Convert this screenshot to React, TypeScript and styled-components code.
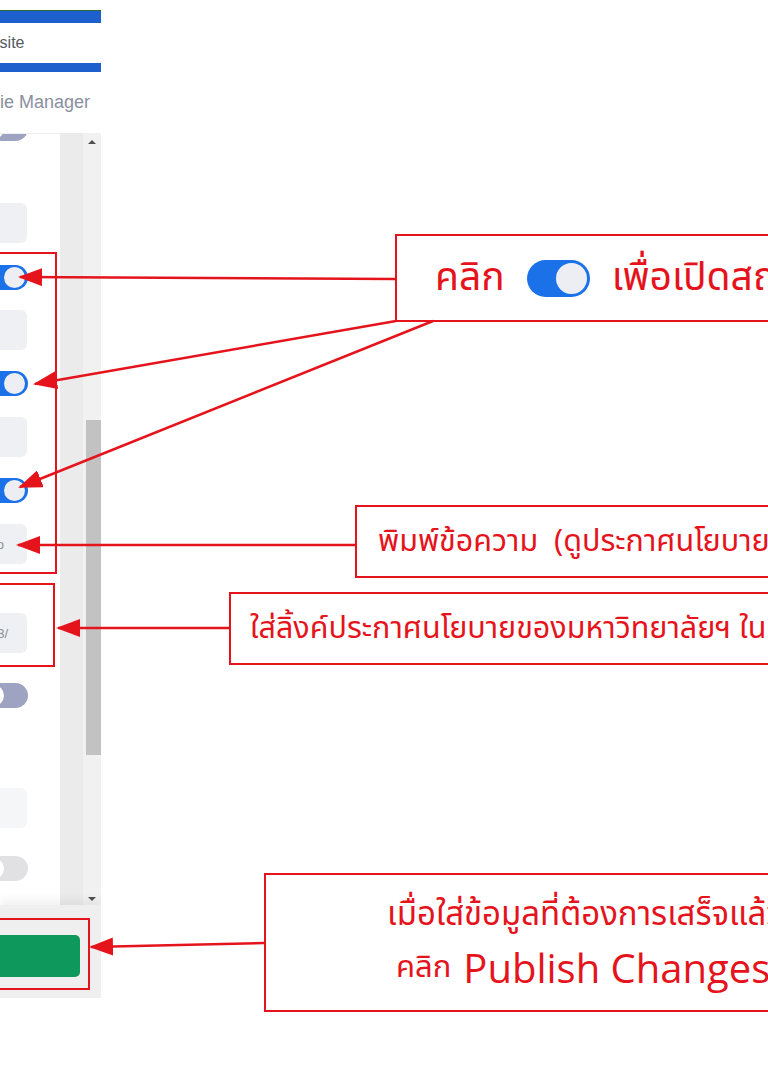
import React from 'react';
import styled, { createGlobalStyle } from 'styled-components';

const GlobalStyle = createGlobalStyle`
  html, body {
    margin: 0;
    padding: 0;
    background: #fff;
  }
  body {
    font-family: "Liberation Sans", "Noto Sans", sans-serif;
  }
`;

const RED = '#e5141c';

const Page = styled.div`
  position: relative;
  width: 768px;
  height: 1069px;
  overflow: hidden;
  background: #fff;
`;

/* ---------- left settings panel (cropped) ---------- */

const Panel = styled.div`
  width: 101px;
  display: flex;
  flex-direction: column;
  overflow: hidden;
  padding-top: 10px;
`;

const HeaderBar = styled.div<{ $h: number; $green?: boolean }>`
  height: ${p => p.$h}px;
  background: #1c5fcd;
  border-top: ${p => (p.$green ? '1px solid #2e6a2c' : 'none')};
`;

const HeaderRow = styled.div<{ $h: number; $size: number; $color: string; $shift: number }>`
  height: ${p => p.$h}px;
  display: flex;
  align-items: center;
  white-space: nowrap;
  font-size: ${p => p.$size}px;
  color: ${p => p.$color};
  span {
    margin-left: ${p => p.$shift}px;
  }
`;

const Body = styled.div`
  height: 772px;
  display: flex;
`;

const Content = styled.div`
  width: 60px;
  background: #fff;
  border-top: 1px solid #eeeff1;
  overflow: hidden;
  display: flex;
  flex-direction: column;
  align-items: flex-end;
  padding-right: 32px;
  box-sizing: border-box;
`;

const Gutter = styled.div`
  width: 23px;
  background: #ebebeb;
`;

const Scrollbar = styled.div`
  width: 18px;
  background: #f1f1f1;
  display: flex;
  flex-direction: column;
  align-items: center;
`;

const ScrollArrow = styled.div<{ $down?: boolean }>`
  height: 17px;
  display: flex;
  align-items: ${p => (p.$down ? 'flex-end' : 'center')};
  padding-bottom: ${p => (p.$down ? '4px' : '0')};
  box-sizing: border-box;
  &::before {
    content: '';
    border-left: 4px solid transparent;
    border-right: 4px solid transparent;
    ${p => (p.$down ? 'border-top: 4px solid #505050;' : 'border-bottom: 4px solid #505050;')}
  }
`;

const Track = styled.div`
  flex: 1;
  width: 100%;
  display: flex;
  flex-direction: column;
  align-items: flex-end;
`;

const Thumb = styled.div`
  margin-top: 270px;
  width: 15px;
  height: 335px;
  background: #c2c2c2;
`;

type ToggleKind = 'on' | 'off' | 'disabled';

const trackColor = (k: ToggleKind) =>
  k === 'on' ? '#1b72e8' : k === 'off' ? '#9ea3c1' : '#e1e1e3';

const Toggle = styled.div<{ $kind: ToggleKind; $top: number }>`
  flex-shrink: 0;
  margin-top: ${p => p.$top}px;
  width: 48px;
  height: 25px;
  border-radius: 13px;
  background: ${p => trackColor(p.$kind)};
  position: relative;
  &::after {
    content: '';
    position: absolute;
    top: 2px;
    ${p => (p.$kind === 'on' ? 'right: 3px;' : 'left: 3px;')}
    width: 21px;
    height: 21px;
    border-radius: 50%;
    background: ${p => (p.$kind === 'on' ? '#eceef4' : '#fff')};
  }
`;

const Field = styled.div<{ $top: number; $pale?: boolean; $pad?: number }>`
  flex-shrink: 0;
  margin-top: ${p => p.$top}px;
  margin-right: 1px;
  width: 220px;
  height: 40px;
  border-radius: 6px;
  background: ${p => (p.$pale ? '#f5f6f8' : '#eff0f3')};
  display: flex;
  align-items: center;
  justify-content: flex-end;
  padding-right: ${p => p.$pad ?? 10}px;
  box-sizing: border-box;
  font-size: 13px;
  color: #8a8e99;
  white-space: nowrap;
  overflow: hidden;
`;

const Footer = styled.div`
  height: 93px;
  background: #efefef;
  box-shadow: 0 -6px 8px rgba(0, 0, 0, 0.05);
  position: relative;
  display: flex;
  justify-content: flex-end;
  padding: 30px 21px 0 0;
  box-sizing: border-box;
`;

const PublishButton = styled.button`
  flex-shrink: 0;
  width: 300px;
  height: 42px;
  border: none;
  border-radius: 5px;
  background: #0f985b;
  color: #fff;
  font-size: 14px;
  font-family: inherit;
`;

/* ---------- annotations ---------- */

const Frame = styled.div<{ $x: number; $y: number; $w: number; $h: number }>`
  position: absolute;
  left: ${p => p.$x}px;
  top: ${p => p.$y}px;
  width: ${p => p.$w}px;
  height: ${p => p.$h}px;
  border: 2px solid ${RED};
  box-sizing: border-box;
`;

const Callout = styled(Frame)<{ $pad: number; $size: number }>`
  background: #fff;
  display: flex;
  flex-direction: column;
  justify-content: center;
  padding-left: ${p => p.$pad}px;
  font-family: "Noto Sans Thai", "Leelawadee UI", "Tahoma", "Noto Sans", sans-serif;
  font-size: ${p => p.$size}px;
  color: ${RED};
  white-space: pre;
`;

const Line = styled.div<{ $indent?: number; $gap?: number; $size?: number }>`
  display: flex;
  align-items: center;
  gap: ${p => p.$gap ?? 22}px;
  margin-left: ${p => p.$indent ?? 0}px;
  ${p => (p.$size ? `font-size: ${p.$size}px;` : '')}
  & > * {
    flex-shrink: 0;
  }
`;

const Latin = styled.span`
  font-family: "Open Sans", "Liberation Sans", sans-serif;
  font-size: 40px;
`;

const SwitchIcon = styled.span`
  display: inline-flex;
  align-items: center;
  justify-content: flex-end;
  width: 63px;
  height: 37px;
  border-radius: 19px;
  background: #1b72e8;
  padding-right: 3px;
  box-sizing: border-box;
  &::after {
    content: '';
    width: 31px;
    height: 31px;
    border-radius: 50%;
    background: #eceef4;
  }
`;

const Arrows = styled.svg`
  position: absolute;
  left: 0;
  top: 0;
  pointer-events: none;
`;

const arrows: [number, number, number, number][] = [
  [395, 279, 20, 277],
  [396, 321, 35, 384],
  [433, 321, 20, 487],
  [355, 545, 18, 545],
  [229, 628, 58, 628],
  [264, 943, 91, 947],
];

export default function App() {
  return (
    <Page>
      <GlobalStyle />
      <Panel>
        <HeaderBar $h={12} $green />
        <HeaderRow $h={40} $size={16} $color="#555a63" $shift={-33}>
          <span>Website</span>
        </HeaderRow>
        <HeaderBar $h={9} />
        <HeaderRow $h={61} $size={18} $color="#8a8fa0" $shift={-42}>
          <span>Cookie Manager</span>
        </HeaderRow>
        <Body>
          <Content>
            <Toggle $kind="off" $top={-18} />
            <Field $top={62} />
            <Toggle $kind="on" $top={22} />
            <Field $top={20} />
            <Toggle $kind="on" $top={21} />
            <Field $top={21} />
            <Toggle $kind="on" $top={21} />
            <Field $top={21} $pad={23}>We use cookies to improve your experience, read more info</Field>
            <Field $top={49} $pad={19}>https://www.example.ac.th/pdpa/2023/</Field>
            <Toggle $kind="off" $top={30} />
            <Field $top={80} $pale />
            <Toggle $kind="disabled" $top={28} />
          </Content>
          <Gutter />
          <Scrollbar>
            <ScrollArrow />
            <Track>
              <Thumb />
            </Track>
            <ScrollArrow $down />
          </Scrollbar>
        </Body>
        <Footer>
          <PublishButton>Publish Changes</PublishButton>
        </Footer>
      </Panel>

      <Frame $x={-2} $y={252} $w={59} $h={322} />
      <Frame $x={-2} $y={583} $w={57} $h={84} />
      <Frame $x={-2} $y={918} $w={92} $h={72} />

      <Callout $x={395} $y={234} $w={420} $h={88} $pad={38} $size={39}>
        <Line>
          <span>คลิก</span>
          <SwitchIcon />
          <span>เพื่อเปิดสถานะการใช้งาน</span>
        </Line>
      </Callout>
      <Callout $x={355} $y={505} $w={460} $h={73} $pad={21} $size={30.5}>
        <span>{'พิมพ์ข้อความ  (ดูประกาศนโยบายคุกกี้ของมหาวิทยาลัยฯ)'}</span>
      </Callout>
      <Callout $x={229} $y={592} $w={590} $h={73} $pad={19} $size={30.5}>
        <span>ใส่ลิ้งค์ประกาศนโยบายของมหาวิทยาลัยฯ ในช่องนี้</span>
      </Callout>
      <Callout $x={264} $y={873} $w={560} $h={139} $pad={121} $size={33}>
        <Line>
          <span>เมื่อใส่ข้อมูลที่ต้องการเสร็จแล้ว</span>
        </Line>
        <Line $indent={9} $gap={12} $size={31}>
          <span>คลิก</span>
          <Latin>Publish Changes</Latin>
        </Line>
      </Callout>

      <Arrows width={768} height={1069}>
        <defs>
          <marker
            id="head"
            markerUnits="userSpaceOnUse"
            markerWidth={24}
            markerHeight={18}
            refX={22}
            refY={9}
            orient="auto"
          >
            <path d="M0 0 L24 9 L0 18 Z" fill={RED} />
          </marker>
        </defs>
        {arrows.map(([x1, y1, x2, y2], i) => (
          <line
            key={i}
            x1={x1}
            y1={y1}
            x2={x2}
            y2={y2}
            stroke={RED}
            strokeWidth={2.5}
            markerEnd="url(#head)"
          />
        ))}
      </Arrows>
    </Page>
  );
}
